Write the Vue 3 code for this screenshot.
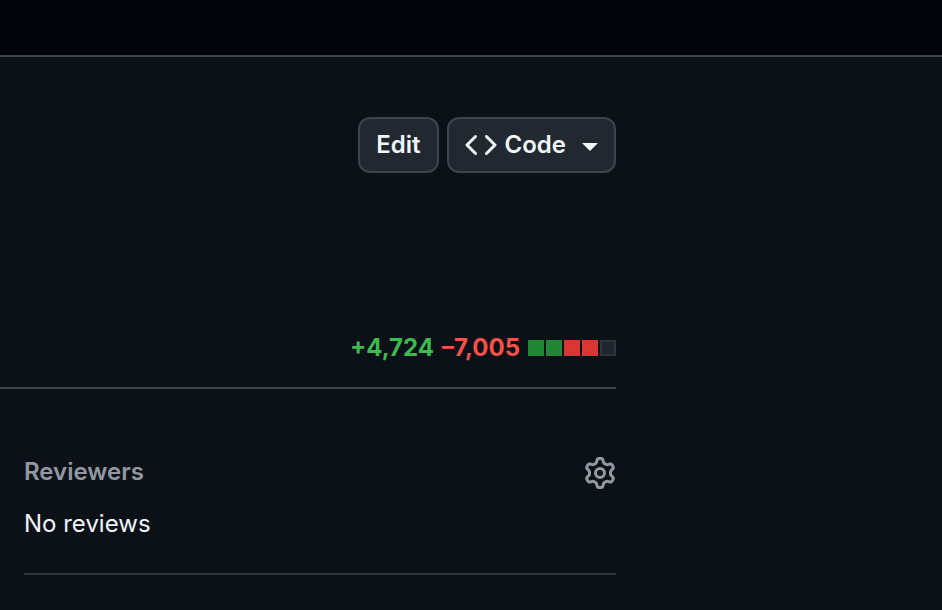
<template>
  <div class="page">
    <header class="topbar"></header>

    <main class="content">
      <div class="actions">
        <button type="button" class="btn">Edit</button>
        <button type="button" class="btn btn-code">
          <svg width="32" height="32" viewBox="0 0 16 16" fill="currentColor" aria-hidden="true">
            <path d="m11.28 3.22 4.25 4.25a.75.75 0 0 1 0 1.06l-4.25 4.25a.749.749 0 0 1-1.275-.326.749.749 0 0 1 .215-.734L13.94 8l-3.72-3.72a.749.749 0 0 1 .326-1.275.749.749 0 0 1 .734.215Zm-6.56 0a.751.751 0 0 1 1.042.018.751.751 0 0 1 .018 1.042L2.06 8l3.72 3.72a.749.749 0 0 1-.326 1.275.749.749 0 0 1-.734-.215L.47 8.53a.75.75 0 0 1 0-1.06Z" />
          </svg>
          <span>Code</span>
          <span class="caret"></span>
        </button>
      </div>

      <div class="diffstat">
        <span class="added">+{{ additions }}</span>
        <span class="deleted">–{{ deletions }}</span>
        <span class="blocks">
          <span v-for="(type, i) in blocks" :key="i" class="block" :class="type"></span>
        </span>
      </div>

      <section class="reviewers">
        <div class="reviewers-head">
          <h2>Reviewers</h2>
          <button type="button" class="gear" aria-label="Edit reviewers">
            <svg width="32" height="32" viewBox="0 0 16 16" fill="currentColor" aria-hidden="true">
              <path d="M8 0a8.2 8.2 0 0 1 .701.031C9.444.095 9.99.645 10.16 1.29l.288 1.107c.018.066.079.158.212.224.231.114.454.243.668.386.123.082.233.09.299.071l1.103-.303c.644-.176 1.392.021 1.82.63.27.385.506.792.704 1.218.315.675.111 1.422-.364 1.891l-.814.806c-.049.048-.098.147-.088.294.016.257.016.515 0 .772-.01.147.038.246.088.294l.814.806c.475.469.679 1.216.364 1.891a7.977 7.977 0 0 1-.704 1.217c-.428.61-1.176.807-1.82.63l-1.102-.302c-.067-.019-.177-.011-.3.071a5.909 5.909 0 0 1-.668.386c-.133.066-.194.158-.211.224l-.29 1.106c-.168.646-.715 1.196-1.458 1.26a8.006 8.006 0 0 1-1.402 0c-.743-.064-1.289-.614-1.458-1.26l-.289-1.106c-.018-.066-.079-.158-.212-.224a5.738 5.738 0 0 1-.668-.386c-.123-.082-.233-.09-.299-.071l-1.103.303c-.644.176-1.392-.021-1.82-.63a8.12 8.12 0 0 1-.704-1.218c-.315-.675-.111-1.422.363-1.891l.815-.806c.05-.048.098-.147.088-.294a6.214 6.214 0 0 1 0-.772c.01-.147-.038-.246-.088-.294l-.815-.806C.635 6.045.431 5.298.746 4.623a7.92 7.92 0 0 1 .704-1.217c.428-.61 1.176-.807 1.82-.63l1.102.302c.067.019.177.011.3-.071.214-.143.437-.272.668-.386.133-.066.194-.158.211-.224l.29-1.106C6.009.645 6.556.095 7.299.03 7.53.01 7.764 0 8 0Zm-.571 1.525c-.036.003-.108.036-.137.146l-.289 1.105c-.147.561-.549.967-.998 1.189-.173.086-.34.183-.5.29-.417.278-.97.423-1.529.27l-1.103-.303c-.109-.03-.175.016-.195.045-.22.312-.412.644-.573.99-.014.031-.021.11.059.19l.815.806c.411.406.562.957.53 1.456a4.709 4.709 0 0 0 0 .582c.032.499-.119 1.05-.53 1.456l-.815.806c-.081.08-.073.159-.059.19.162.346.353.677.573.989.02.03.085.076.195.046l1.102-.303c.56-.153 1.113-.008 1.53.27.161.107.328.204.501.29.447.222.85.629.997 1.189l.289 1.105c.029.109.101.143.137.146a6.6 6.6 0 0 0 1.142 0c.036-.003.108-.036.137-.146l.289-1.105c.147-.561.549-.967.998-1.189.173-.086.34-.183.5-.29.417-.278.97-.423 1.529-.27l1.103.303c.109.029.175-.016.195-.045.22-.313.411-.644.573-.99.014-.031.021-.11-.059-.19l-.815-.806c-.411-.406-.562-.957-.53-1.456a4.709 4.709 0 0 0 0-.582c-.032-.499.119-1.05.53-1.456l.815-.806c.081-.08.073-.159.059-.19a6.464 6.464 0 0 0-.573-.989c-.02-.03-.085-.076-.195-.046l-1.102.303c-.56.153-1.113.008-1.53-.27a4.44 4.44 0 0 0-.501-.29c-.447-.222-.85-.629-.997-1.189l-.289-1.105c-.029-.11-.101-.143-.137-.146a6.6 6.6 0 0 0-1.142 0ZM11 8a3 3 0 1 1-6 0 3 3 0 0 1 6 0ZM9.5 8a1.5 1.5 0 1 0-3.001.001A1.5 1.5 0 0 0 9.5 8Z" />
            </svg>
          </button>
        </div>
        <p>No reviews</p>
      </section>
    </main>
  </div>
</template>

<script setup>
const additions = (4724).toLocaleString('en-US')
const deletions = (7005).toLocaleString('en-US')
const blocks = ['add', 'add', 'del', 'del', 'neutral']
</script>

<style>
body {
  margin: 0;
  background: #0c1118;
}
</style>

<style scoped>
.page {
  font-family: Inter, "Liberation Sans", sans-serif;
  font-size: 24px;
  line-height: 30px;
  color: #f0f6fc;
}

.topbar {
  height: 55px;
  background: #010409;
  border-bottom: 2px solid #3d444d;
}

.content {
  margin-right: 326px;
  padding-top: 60px;
}

.actions {
  display: flex;
  justify-content: flex-end;
  gap: 8px;
}

.btn {
  display: flex;
  align-items: center;
  height: 56px;
  padding: 0 16px;
  border: 2px solid #3d444d;
  border-radius: 12px;
  background: #212830;
  color: #f0f6fc;
  font: inherit;
  font-weight: 600;
  cursor: pointer;
}

.btn-code {
  gap: 8px;
}

.caret {
  margin: 4px 0 0 8px;
  border: 8px solid transparent;
  border-top-color: currentColor;
  border-bottom: 0;
}

.diffstat {
  display: flex;
  align-items: center;
  justify-content: flex-end;
  gap: 8px;
  margin-top: 160px;
  padding-bottom: 24px;
  border-bottom: 2px solid #3d444d;
  font-weight: 700;
}

.added {
  color: #3fb950;
}

.deleted {
  color: #f85149;
}

.blocks {
  display: flex;
  gap: 2px;
}

.block {
  box-sizing: border-box;
  width: 16px;
  height: 16px;
}

.add {
  background: #238636;
}

.del {
  background: #da3633;
}

.neutral {
  background: #1f242c;
  border: 2px solid #2f353d;
}

.reviewers {
  margin-left: 24px;
  padding: 68px 0 34px;
  border-bottom: 2px solid #2f353d;
}

.reviewers-head {
  display: flex;
  align-items: flex-start;
  justify-content: space-between;
}

h2 {
  margin: 0;
  font-size: 24px;
  font-weight: 600;
  color: #9198a1;
}

.gear {
  display: flex;
  padding: 0;
  border: 0;
  background: none;
  color: #9198a1;
  cursor: pointer;
}

p {
  margin: 20px 0 0;
}
</style>
